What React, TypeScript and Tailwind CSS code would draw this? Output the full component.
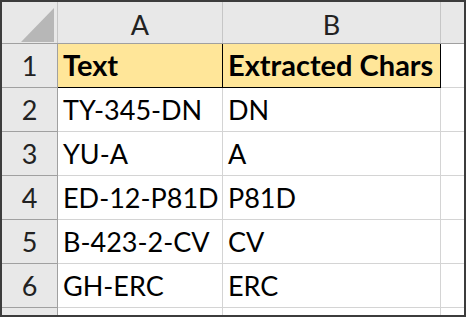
import React from "react";

const rows = [
  ["TY-345-DN", "DN"],
  ["YU-A", "A"],
  ["ED-12-P81D", "P81D"],
  ["B-423-2-CV", "CV"],
  ["GH-ERC", "ERC"],
];

const font = { fontFamily: "Lato, 'Open Sans', sans-serif" } as React.CSSProperties;

export default function App() {
  return (
    <div className="w-[469px] h-[319px] bg-white" style={font}>
      <div className="w-[466px] h-[317px] border-2 border-[#3c3c3c] flex flex-col text-black">
        {/* column header row */}
        <div className="flex h-[42px] bg-[#e8e8e8] border-b border-[#a0a0a0]">
          <div className="w-[56px] border-r border-[#c6c6c6] relative">
            <svg className="absolute left-[18px] top-[5px]" width="36" height="36" viewBox="0 0 36 36">
              <polygon points="1,35 34,35 34,1" fill="#b7b7b7" />
            </svg>
          </div>
          <div className="w-[165px] border-r border-[#c6c6c6] flex items-end justify-center pb-[5px] text-[27px] leading-none text-[#222]">A</div>
          <div className="w-[218px] border-r border-[#c6c6c6] flex items-end justify-center pb-[5px] text-[27px] leading-none text-[#222]">B</div>
          <div className="flex-1" />
        </div>
        {/* row 1 */}
        <div className="flex h-[44px]">
          <div className="w-[56px] bg-[#e8e8e8] border-r border-b border-[#a0a0a0] flex items-end justify-center pb-[8px] text-[27px] leading-none text-[#222]">1</div>
          <div className="w-[165px] bg-[#ffe699] border-r border-b border-black flex items-end pl-[5px] pb-[8px] text-[29px] leading-none font-bold">Text</div>
          <div className="w-[218px] bg-[#ffe699] border-r border-b border-black flex items-end pl-[5px] pb-[8px] text-[29px] leading-none font-bold whitespace-nowrap">Extracted Chars</div>
          <div className="flex-1 border-b border-[#d4d4d4]" />
        </div>
        {rows.map((r, i) => (
          <div key={i} className="flex h-[44px]">
            <div className="w-[56px] bg-[#e8e8e8] border-r border-b border-[#a0a0a0] flex items-end justify-center pb-[8px] text-[27px] leading-none text-[#222]">{i + 2}</div>
            <div className="w-[165px] border-r border-b border-[#d4d4d4] flex items-end pl-[5px] pb-[8px] text-[27px] leading-none whitespace-nowrap">{r[0]}</div>
            <div className="w-[218px] border-r border-b border-[#d4d4d4] flex items-end pl-[5px] pb-[8px] text-[27px] leading-none whitespace-nowrap">{r[1]}</div>
            <div className="flex-1 border-b border-[#d4d4d4]" />
          </div>
        ))}
        <div className="flex flex-1">
          <div className="w-[56px] bg-[#e8e8e8] border-r border-[#a0a0a0]" />
          <div className="w-[165px] border-r border-[#d4d4d4]" />
          <div className="w-[218px] border-r border-[#d4d4d4]" />
          <div className="flex-1" />
        </div>
      </div>
    </div>
  );
}
